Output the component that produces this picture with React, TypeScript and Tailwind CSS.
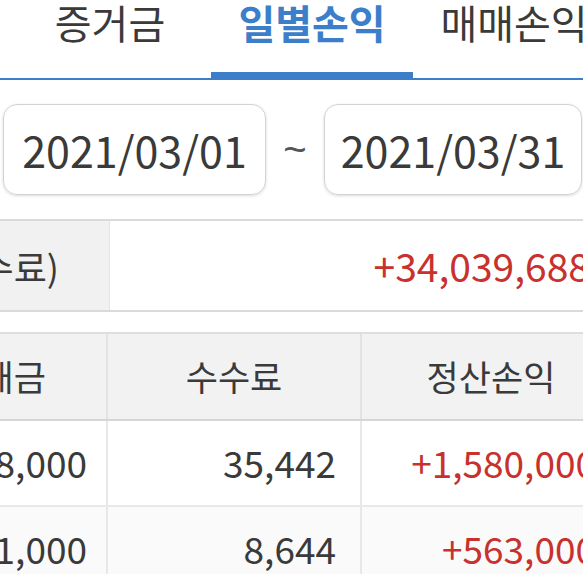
import React from "react";

const tabs = ["증거금", "일별손익", "매매손익"];

const rows = [
  { amount: "158,000", fee: "35,442", profit: "+1,580,000", bg: "bg-white" },
  { amount: "561,000", fee: "8,644", profit: "+563,000", bg: "bg-[#fafafa]" },
];

const App = () => {
  const active = 1;

  return (
    <div className="w-[583px] h-[574px] overflow-hidden bg-white text-[#3a3a3a] font-['Noto_Sans_CJK_KR','Noto_Sans',sans-serif]">
      {/* tabs */}
      <div className="flex w-[640px] pl-[9px] border-b-2 border-[#3d7ecb]">
        {tabs.map((tab, index) => (
          <div
            key={tab}
            className={
              index === active
                ? "w-[202px] h-[78px] shrink-0 flex justify-center border-b-[6px] border-[#3d7ecb] text-[#3d7ecb] font-bold"
                : "w-[202px] h-[78px] shrink-0 flex justify-center"
            }
          >
            <span className="text-[40px] leading-[45px] whitespace-nowrap">{tab}</span>
          </div>
        ))}
      </div>

      {/* period */}
      <div className="flex items-center w-[640px] pl-[3px] pt-[24px] pb-[24px]">
        <div className="w-[263px] h-[91px] shrink-0 flex items-center justify-center rounded-[14px] border border-[#d2d2d2] shadow-[0_1px_3px_rgba(0,0,0,0.15)] text-[43px] leading-none">
          2021/03/01
        </div>
        <div className="w-[58px] shrink-0 flex justify-center font-['Liberation_Sans',sans-serif] text-[40px] leading-none text-[#555] pb-[2px]">
          ~
        </div>
        <div className="w-[258px] h-[91px] shrink-0 flex items-center justify-center rounded-[14px] border border-[#d2d2d2] shadow-[0_1px_3px_rgba(0,0,0,0.15)] text-[43px] leading-none">
          2021/03/31
        </div>
      </div>

      {/* total */}
      <div className="flex w-[620px] h-[93px] border-y-2 border-[#dadada]">
        <div className="w-[110px] shrink-0 flex items-center justify-end overflow-hidden bg-[#f1f1f1] border-r border-[#e4e4e4] pr-[50px] whitespace-nowrap text-[36px]">
          정산손익(수수료)
        </div>
        <div className="flex-1 flex items-center justify-end pr-[30px] text-[39px] text-[#c8312d] whitespace-nowrap">
          +34,039,688
        </div>
      </div>

      {/* table */}
      <div className="w-[620px] mt-[20px] border-t-2 border-[#dedede]">
        <div className="flex h-[87px] bg-[#f2f2f2] border-b-2 border-[#d6d6d6] text-[35px]">
          <div className="w-[108px] shrink-0 flex items-center justify-end overflow-hidden pr-[60px] border-r-2 border-[#e2e2e2] whitespace-nowrap">
            매매금
          </div>
          <div className="w-[254px] shrink-0 flex items-center justify-center border-r-2 border-[#e2e2e2]">
            수수료
          </div>
          <div className="flex-1 flex items-center justify-center">정산손익</div>
        </div>
        {rows.map((row) => (
          <div key={row.fee} className={"flex h-[86px] border-b-2 border-[#e8e8e8] text-[37px] " + row.bg}>
            <div className="w-[108px] shrink-0 flex items-center justify-end overflow-hidden pr-[19px] border-r-2 border-[#e8e8e8] whitespace-nowrap">
              {row.amount}
            </div>
            <div className="w-[254px] shrink-0 flex items-center justify-end pr-[24px] border-r-2 border-[#e8e8e8]">
              {row.fee}
            </div>
            <div className="flex-1 flex items-center justify-end pr-[24px] text-[#c8312d] whitespace-nowrap">
              {row.profit}
            </div>
          </div>
        ))}
      </div>
    </div>
  );
};

export default App;
